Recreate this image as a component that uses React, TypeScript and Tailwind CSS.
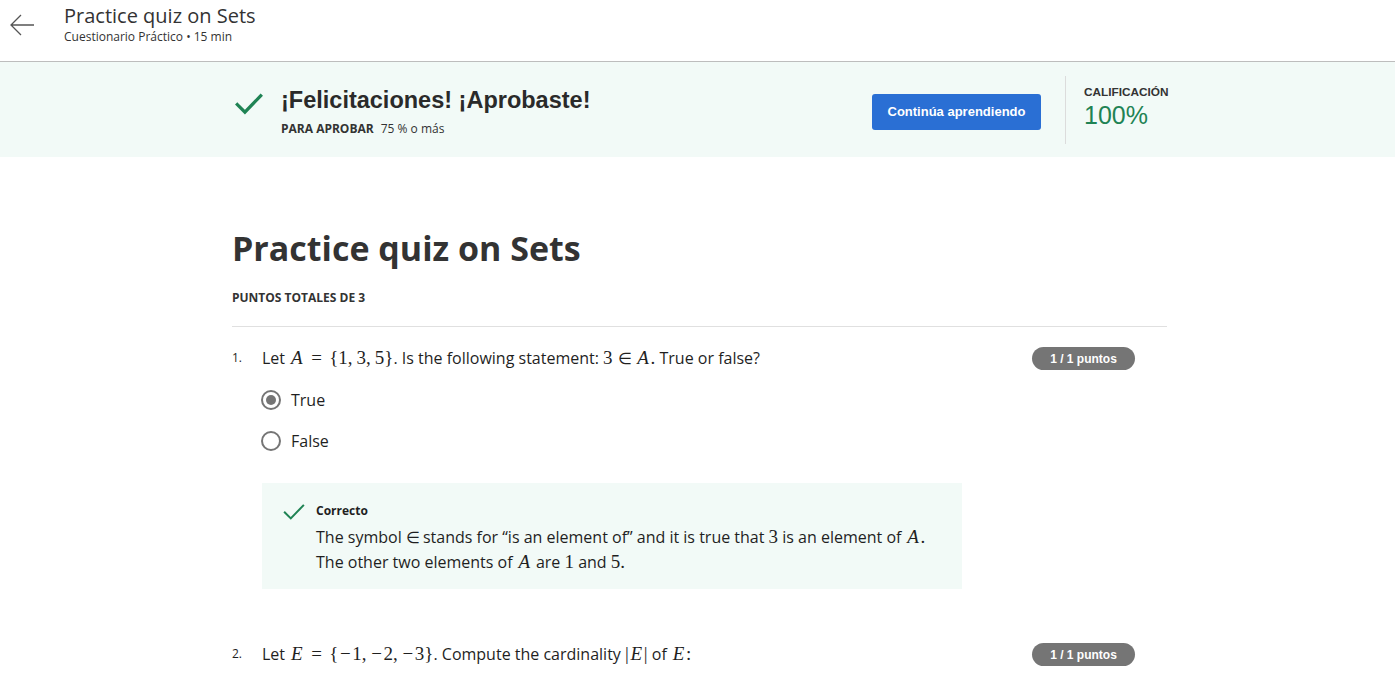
import React from "react";

const serif = { fontFamily: '"Liberation Serif", "Times New Roman", serif' };

const M = ({ children, className = "" }: { children: React.ReactNode; className?: string }) => (
  <span className={"text-[19px] leading-[1] " + className} style={serif}>{children}</span>
);
const V = ({ children, w }: { children: React.ReactNode; w: string }) => (
  <span className={"italic text-[19px] leading-[1] inline-block text-center " + w} style={serif}>{children}</span>
);
const Rel = ({ children }: { children: React.ReactNode }) => (
  <span className="text-[19px] leading-[1] mx-[5px] inline-block w-[15px] text-center" style={serif}>{children}</span>
);
const In = ({ rel = false }: { rel?: boolean }) => (
  <span className={"text-[16px] leading-[1] inline-block w-[13px] text-center " + (rel ? "mx-[5px]" : "")} style={serif}>∈</span>
);
const Minus = () => (
  <span className="text-[19px] leading-[1] inline-block w-[14px] text-center" style={serif}>−</span>
);
const Comma = ({ gap = "mr-[4px]" }: { gap?: string }) => (
  <span className={"text-[19px] leading-[1] " + gap} style={serif}>,</span>
);

const Check = ({ size, stroke }: { size: number; stroke: number }) => (
  <svg width={size} height={size} viewBox="0 0 24 24" fill="none">
    <path d="M2 12.5 L8.5 19 L22 5" stroke="#1f8354" strokeWidth={stroke} strokeLinecap="square" />
  </svg>
);

const Badge = () => (
  <div className="h-[23px] w-[103px] rounded-full bg-[#757575] text-white text-[12px] font-bold flex items-center justify-center [font-family:'Liberation_Sans',Arial,sans-serif]">
    1 / 1 puntos
  </div>
);

export default function App() {
  return (
    <div className="h-[675px] overflow-hidden bg-white text-[#1f1f1f] [font-family:'Open_Sans',sans-serif]">
      {/* Header */}
      <div className="h-[62px] border-b border-[#bdbdbd] flex items-start">
        <div className="w-[64px] h-full flex items-start pt-[12px] pl-[9px]">
          <svg width="26" height="26" viewBox="0 0 26 26" fill="none">
            <path d="M25 13 H2 M12 3 L2 13 L12 23" stroke="#555" strokeWidth="1.3" />
          </svg>
        </div>
        <div className="pt-[3px]">
          <div className="text-[20px] leading-[26px] text-[#333]">Practice quiz on Sets</div>
          <div className="text-[12px] leading-[18px] text-[#333] -mt-[1px]">Cuestionario Práctico • 15 min</div>
        </div>
      </div>

      {/* Band */}
      <div className="h-[95px] bg-[#f2faf7] flex">
        <div className="w-[232px]" />
        <div className="flex-1 flex">
          <div className="w-[640px] flex pt-[26px]">
            <div className="pt-[2px] w-[49px] pl-[3px]">
              <Check size={28} stroke={2.8} />
            </div>
            <div>
              <div className="text-[23.5px] leading-[24px] font-bold text-[#2a2a2a] [font-family:'Liberation_Sans',Arial,sans-serif]">
                ¡Felicitaciones! ¡Aprobaste!
              </div>
              <div className="mt-[9px] text-[12px] leading-[16px] text-[#333]">
                <span className="font-bold">PARA APROBAR</span>
                <span className="ml-[7px]">75 % o más</span>
              </div>
            </div>
          </div>
          <div className="pt-[32px]">
            <div className="w-[169px] h-[36px] rounded-[3px] bg-[#2a6fd4] text-white text-[13px] font-bold flex items-center justify-center [font-family:'Liberation_Sans',Arial,sans-serif]">
              Continúa aprendiendo
            </div>
          </div>
          <div className="ml-[24px] mt-[14px] h-[68px] w-px bg-[#dcdcdc]" />
          <div className="ml-[18px] pt-[22px]">
            <div className="text-[11.8px] font-bold leading-[16px] text-[#333] [font-family:'Liberation_Sans',Arial,sans-serif]">CALIFICACIÓN</div>
            <div className="text-[25px] leading-[28px] mt-[1px] text-[#1f8354] [font-family:'Liberation_Sans',Arial,sans-serif]">100%</div>
          </div>
        </div>
      </div>

      {/* Main */}
      <div className="w-[935px] ml-[232px]">
        <h1 className="mt-[69px] text-[34px] leading-[44px] font-bold text-[#333]">Practice quiz on Sets</h1>
        <div className="mt-[20px] text-[12px] leading-[16px] font-bold text-[#333]">PUNTOS TOTALES DE 3</div>
        <div className="mt-[20px] h-px bg-[#e0e0e0]" />

        {/* Q1 */}
        <div className="mt-[19px] flex items-start">
          <div className="w-[30px] text-[12px] leading-[24px]">1.</div>
          <div className="flex-1 text-[16px] leading-[24px]">
            Let <V w="w-[15px]">A</V><Rel>=</Rel><M>{"{1"}</M><Comma /><M>3</M><Comma /><M>{"5}"}</M>. Is the following statement: <M>3</M><In rel /><V w="w-[15px]">A</V><M>.</M> True or false?
          </div>
          <div className="mr-[32px] pt-[1px]"><Badge /></div>
        </div>

        <div className="ml-[29px] mt-[18px] flex items-center h-[24px]">
          <div className="w-[20px] h-[20px] rounded-full border-2 border-[#757575] flex items-center justify-center">
            <div className="w-[10px] h-[10px] rounded-full bg-[#757575]" />
          </div>
          <span className="ml-[10px] text-[16px]">True</span>
        </div>
        <div className="ml-[29px] mt-[17px] flex items-center h-[24px]">
          <div className="w-[20px] h-[20px] rounded-full border-2 border-[#757575]" />
          <span className="ml-[10px] text-[16px]">False</span>
        </div>

        <div className="ml-[30px] mt-[30px] w-[700px] h-[106px] bg-[#f2faf7] flex pt-[17px] pl-[21px]">
          <div className="w-[33px] pt-[1px]"><Check size={22} stroke={2.2} /></div>
          <div className="pt-[2px]">
            <div className="text-[12px] font-bold leading-[18px]">Correcto</div>
            <div className="mt-[5px] text-[16px] leading-[25px]">
              The symbol <In /> stands for “is an element of” and it is true that <M>3</M> is an element of <V w="w-[15px]">A</V><M>.</M>
              <br />
              The other two elements of <V w="w-[15px]">A</V> are <M>1</M> and <M>5</M><M>.</M>
            </div>
          </div>
        </div>

        {/* Q2 */}
        <div className="mt-[53px] flex items-start">
          <div className="w-[30px] text-[12px] leading-[24px]">2.</div>
          <div className="flex-1 text-[16px] leading-[24px]">
            Let <V w="w-[15px]">E</V><Rel>=</Rel><M>{"{"}</M><Minus /><M>1</M><Comma gap="mr-[3px]" /><Minus /><M>2</M><Comma gap="mr-[3px]" /><Minus /><M>{"3}"}</M>. Compute the cardinality <M>|</M><V w="w-[15px]">E</V><M>|</M> of <V w="w-[15px]">E</V><M>:</M>
          </div>
          <div className="mr-[32px] pt-[1px]"><Badge /></div>
        </div>
      </div>
    </div>
  );
}
